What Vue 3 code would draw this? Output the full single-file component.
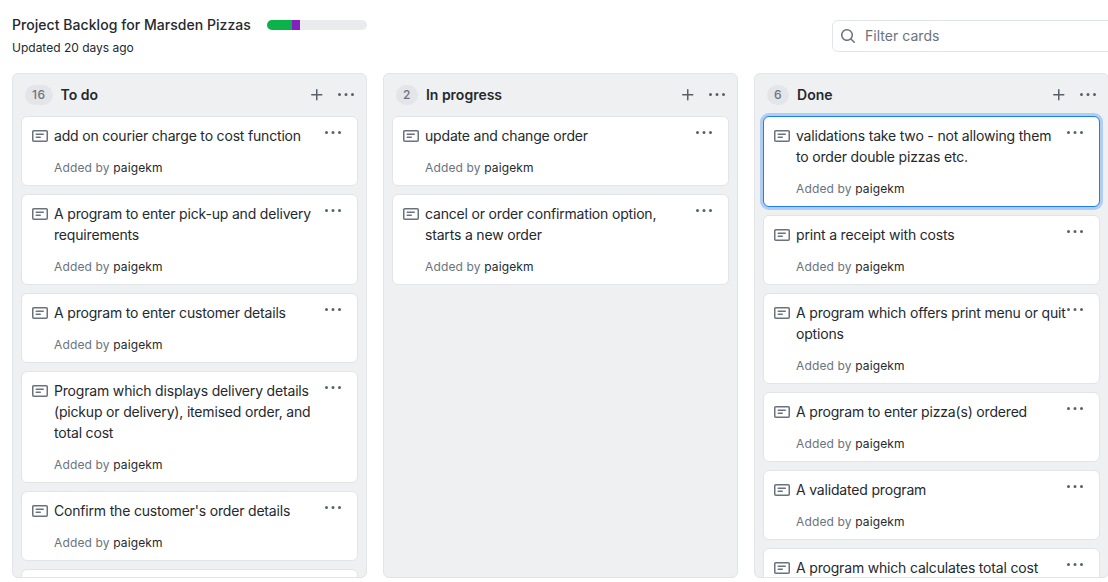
<template>
  <div class="page">
    <div class="top">
      <div class="info">
        <div class="title-row">
          <h1 class="title">Project Backlog for Marsden Pizzas</h1>
          <div class="progress">
            <span class="seg green"></span>
            <span class="seg purple"></span>
          </div>
        </div>
        <div class="updated">Updated 20 days ago</div>
      </div>
      <div class="filter">
        <svg class="search" width="16" height="16" viewBox="0 0 16 16">
          <path fill-rule="evenodd" d="M11.5 7a4.499 4.499 0 1 1-8.998 0A4.499 4.499 0 0 1 11.5 7zm-.82 4.74a6 6 0 1 1 1.06-1.06l3.04 3.04a.75.75 0 1 1-1.06 1.06l-3.04-3.04z" />
        </svg>
        <span class="placeholder">Filter cards</span>
      </div>
    </div>

    <div class="board">
      <section v-for="col in columns" :key="col.name" class="column">
        <header class="col-head">
          <span class="counter">{{ col.count }}</span>
          <span class="col-name">{{ col.name }}</span>
          <svg class="plus" width="16" height="16" viewBox="0 0 16 16">
            <path fill-rule="evenodd" d="M7.75 2a.75.75 0 0 1 .75.75V7h4.25a.75.75 0 0 1 0 1.5H8.5v4.25a.75.75 0 0 1-1.5 0V8.5H2.75a.75.75 0 0 1 0-1.5H7V2.75A.75.75 0 0 1 7.75 2z" />
          </svg>
          <svg class="dots head-dots" width="16" height="16" viewBox="0 0 16 16">
            <path d="M8 9a1.5 1.5 0 1 0 0-3 1.5 1.5 0 0 0 0 3zM1.5 9a1.5 1.5 0 1 0 0-3 1.5 1.5 0 0 0 0 3zm13 0a1.5 1.5 0 1 0 0-3 1.5 1.5 0 0 0 0 3z" />
          </svg>
        </header>
        <div class="cards">
          <article
            v-for="card in col.cards"
            :key="card.text"
            class="card"
            :class="{ selected: card.selected }"
          >
            <svg class="note" width="16" height="16" viewBox="0 0 16 16">
              <path fill-rule="evenodd" d="M0 3.75C0 2.784.784 2 1.75 2h12.5c.966 0 1.75.784 1.75 1.75v8.5A1.75 1.75 0 0 1 14.25 14H1.75A1.75 1.75 0 0 1 0 12.25v-8.5zm1.75-.25a.25.25 0 0 0-.25.25v8.5c0 .138.112.25.25.25h12.5a.25.25 0 0 0 .25-.25v-8.5a.25.25 0 0 0-.25-.25H1.75zM3.5 6.25a.75.75 0 0 1 .75-.75h7a.75.75 0 0 1 0 1.5h-7a.75.75 0 0 1-.75-.75zm.75 2.25a.75.75 0 0 0 0 1.5h4a.75.75 0 0 0 0-1.5h-4z" />
            </svg>
            <div class="card-body">
              <p class="card-text">{{ card.text }}</p>
              <p class="added">Added by <span class="user">paigekm</span></p>
            </div>
            <svg class="dots card-dots" width="16" height="16" viewBox="0 0 16 16">
              <path d="M8 9a1.5 1.5 0 1 0 0-3 1.5 1.5 0 0 0 0 3zM1.5 9a1.5 1.5 0 1 0 0-3 1.5 1.5 0 0 0 0 3zm13 0a1.5 1.5 0 1 0 0-3 1.5 1.5 0 0 0 0 3z" />
            </svg>
          </article>
          <div v-if="col.more" class="card peek"></div>
        </div>
      </section>
    </div>
  </div>
</template>

<script setup>
// \n marks where the card titles wrap
const columns = [
  {
    name: 'To do',
    count: 16,
    more: true,
    cards: [
      { text: 'add on courier charge to cost function' },
      { text: 'A program to enter pick-up and delivery\nrequirements' },
      { text: 'A program to enter customer details' },
      { text: 'Program which displays delivery details\n(pickup or delivery), itemised order, and\ntotal cost' },
      { text: "Confirm the customer's order details" }
    ]
  },
  {
    name: 'In progress',
    count: 2,
    cards: [
      { text: 'update and change order' },
      { text: 'cancel or order confirmation option,\nstarts a new order' }
    ]
  },
  {
    name: 'Done',
    count: 6,
    cards: [
      { text: 'validations take two - not allowing them\nto order double pizzas etc.', selected: true },
      { text: 'print a receipt with costs' },
      { text: 'A program which offers print menu or quit\noptions' },
      { text: 'A program to enter pizza(s) ordered' },
      { text: 'A validated program' },
      { text: 'A program which calculates total cost' }
    ]
  }
]
</script>

<style>
html,
body {
  margin: 0;
  background: #fff;
  overflow: hidden;
}
</style>

<style scoped>
.page {
  width: 1108px;
  height: 582px;
  overflow: hidden;
  font-family: Inter, "Liberation Sans", sans-serif;
  color: #24292e;
}

.top {
  display: flex;
  justify-content: space-between;
  height: 73px;
  padding-left: 12px;
  box-sizing: border-box;
}

.info {
  padding-top: 15px;
}

.title-row {
  display: flex;
  align-items: center;
  gap: 16px;
}

.title {
  margin: 0;
  font-size: 14px;
  font-weight: 500;
  line-height: 20px;
  letter-spacing: 0.05px;
  color: #24292e;
}

.progress {
  display: flex;
  width: 100px;
  height: 10px;
  border-radius: 5px;
  background: #e9ebef;
  overflow: hidden;
}

.seg {
  height: 100%;
}

.green {
  width: 25px;
  background: #0db14b;
}

.purple {
  width: 8px;
  background: #8220c0;
}

.updated {
  margin-top: 4px;
  font-size: 12px;
  line-height: 18px;
  color: #24292e;
}

.filter {
  display: flex;
  align-items: center;
  flex: none;
  width: 300px;
  height: 32px;
  margin-top: 20px;
  margin-right: -24px;
  border: 1px solid #e1e4e8;
  border-radius: 6px;
  box-sizing: border-box;
  padding-left: 7px;
}

.search {
  fill: #6a737d;
}

.placeholder {
  margin-left: 9px;
  font-size: 14px;
  line-height: 20px;
  margin-top: -1px;
  letter-spacing: 0.03px;
  color: #6a737d;
}

.board {
  display: flex;
  gap: 16px;
  padding-left: 12px;
  width: 1130px;
}

.column {
  flex: none;
  width: 355px;
  height: 505px;
  box-sizing: border-box;
  border: 1px solid #e1e4e8;
  border-radius: 6px;
  background: #eff0f2;
  overflow: hidden;
}

.col-head {
  display: flex;
  align-items: center;
  height: 42px;
  padding: 0 12px;
}

.counter {
  padding: 0 7px;
  height: 20px;
  line-height: 19px;
  border-radius: 10px;
  background: #e3e5e9;
  color: #6a737d;
  font-size: 12px;
  font-weight: 500;
  letter-spacing: 0.5px;
  text-align: center;
}

.col-name {
  flex: 1;
  margin-left: 8px;
  font-size: 14px;
  font-weight: 600;
  line-height: 20px;
  color: #24292e;
}

.plus,
.dots {
  fill: #586069;
}

.head-dots {
  margin-left: 13px;
}

.cards {
  display: flex;
  flex-direction: column;
  gap: 8px;
  padding: 0 8px;
}

.card {
  position: relative;
  display: flex;
  flex: none;
  box-sizing: border-box;
  border: 1px solid #e1e4e8;
  border-radius: 6px;
  background: #fff;
  padding: 8px 16px 7px 10px;
}

.card.selected {
  border-color: #1d7df2;
  box-shadow: 0 0 0 3px rgba(29, 125, 242, 0.3);
}

.peek {
  height: 70px;
}

.note {
  flex: none;
  margin-top: 3px;
  fill: #6a737d;
}

.card-body {
  margin-left: 6px;
}

.card-text {
  margin: 0;
  font-size: 14px;
  line-height: 21px;
  letter-spacing: -0.18px;
  white-space: pre-line;
  color: #24292e;
}

.added {
  margin: 11px 0 0;
  font-size: 12px;
  line-height: 21px;
  letter-spacing: 0.14px;
  color: #6a737d;
}

.user {
  color: #24292e;
}

.card-dots {
  position: absolute;
  top: 8px;
  right: 16px;
  fill: #586069;
}
</style>
